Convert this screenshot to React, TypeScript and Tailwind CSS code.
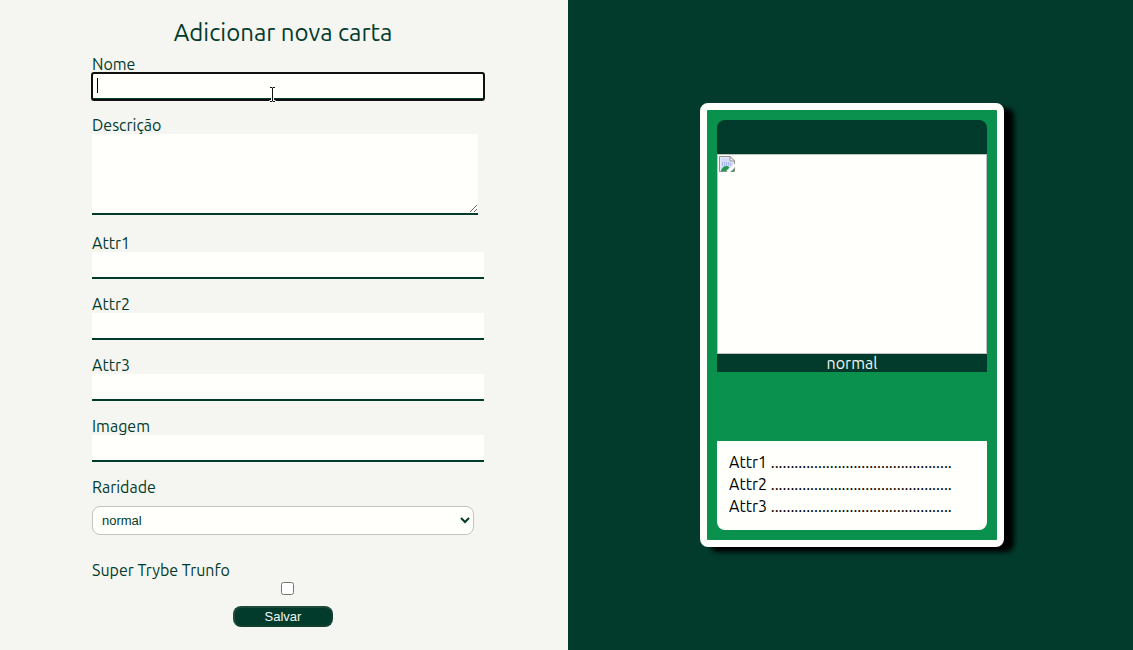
import { useState } from 'react';

const inputClass =
  'block h-[27px] w-[392px] border-b-2 border-[#023b2c] bg-[#fffffc] px-1 text-sm text-black outline-none';

function Field({ id, label, value, onChange }: { id: string; label: string; value: string; onChange: (v: string) => void }) {
  return (
    <div className="mb-4">
      <label htmlFor={id} className="block">{label}</label>
      <input id={id} className={inputClass} value={value} onChange={(e) => onChange(e.target.value)} />
    </div>
  );
}

function BrokenImage() {
  return (
    <svg width="16" height="16" viewBox="0 0 16 16" role="img" aria-label="Imagem da carta">
      <path d="M.5.5H11L15.5 5v10.500H.5z" fill="#e4eafc" stroke="#8f8f8f" />
      <path d="M2 2h8v3.500h4V8L7 15H2z" fill="#d3dcfb" />
      <path d="M3 6h1v4H3zM5 6h1v4H5zM7 6h1v4H7zM9 6h1v4H9zM11 7h1v3h-1z" fill="#a9b8f5" />
      <path d="M2 14.500c1-3 3.500-5 6.500-4.500l2 1.500-3.500 3.500H2z" fill="#23984f" />
      <path d="M11 .5V5h4.500z" fill="#fff" stroke="#8f8f8f" />
      <path d="M16 7.500 7.500 16H11l5-5z" fill="#fffffc" />
      <path d="m15 12.500-3 3h3z" fill="#2fa35a" />
    </svg>
  );
}

function TextCursor() {
  return (
    <svg className="pointer-events-none absolute top-[13px] left-[176px] z-10" width="9" height="17" viewBox="0 0 9 17" aria-hidden="true">
      <path d="M1.500 1.500H4l.5.5.5-.5h2.500M4.500 2v13M1.500 15.500H4l.5-.5.5.5h2.500" fill="none" stroke="#fff" strokeWidth="3" />
      <path d="M2 1.500h2l.5.5.5-.5h2M4.500 2v13M2 15.500h2l.5-.5.5.5h2" fill="none" stroke="#111" />
    </svg>
  );
}

export default function App() {
  const [name, setName] = useState('');
  const [attrs, setAttrs] = useState(['', '', '']);
  const [image, setImage] = useState('');
  const [rarity, setRarity] = useState('normal');
  const [trunfo, setTrunfo] = useState(false);

  return (
    <div className="grid min-h-screen grid-cols-[568fr_565fr] bg-[#023b2c] font-['Ubuntu','Noto_Sans',sans-serif] text-base leading-[18px] font-[450]">
      <section className="flex flex-col items-center bg-[#f5f5f2] pt-[19px] pr-0.5 text-[#023b2c]">
        <form className="w-[382px]" onSubmit={(e) => e.preventDefault()}>
          <h1 className="mb-[9px] text-center text-2xl leading-[27px] font-[450]">Adicionar nova carta</h1>

          <div className="mb-4">
            <label htmlFor="name" className="block">Nome</label>
            <div className="relative">
              <input
                id="name"
                autoFocus
                className="block h-[27px] w-[392px] rounded-xs border-b-2 border-[#023b2c] bg-[#fffffc] px-1 text-sm text-black outline-2 -outline-offset-1 outline-[#101010]"
                value={name}
                onChange={(e) => setName(e.target.value)}
              />
              {name === '' && <span className="pointer-events-none absolute top-[5px] left-[5px] h-[15px] w-px bg-black" />}
              <TextCursor />
            </div>
          </div>

          <div className="mb-[19px]">
            <label htmlFor="description" className="block">Descrição</label>
            <textarea id="description" className="block h-[81px] w-[386px] resize border-b-2 border-[#023b2c] bg-[#fffffc] p-1 text-sm text-black outline-none" />
          </div>

          {attrs.map((attr, i) => (
            <Field
              key={i}
              id={`attr${i + 1}`}
              label={`Attr${i + 1}`}
              value={attr}
              onChange={(v) => setAttrs(attrs.map((old, j) => (j === i ? v : old)))}
            />
          ))}
          <Field id="image" label="Imagem" value={image} onChange={setImage} />

          <label htmlFor="rarity" className="mb-2.5 block">Raridade</label>
          <select
            id="rarity"
            className="mb-[26px] block h-[29px] w-full rounded-lg border border-[#c3c3c1] bg-[#fffffc] pl-[5px] font-['Liberation_Sans',sans-serif] text-[13px] font-normal"
            value={rarity}
            onChange={(e) => setRarity(e.target.value)}
          >
            <option>normal</option>
            <option>raro</option>
            <option>muito raro</option>
          </select>

          <label htmlFor="trunfo" className="block">Super Trybe Trunfo</label>
          <div className="flex flex-col items-center">
            <input id="trunfo" type="checkbox" className="mt-[3px] mb-[11px] ml-2 size-[13px]" checked={trunfo} onChange={(e) => setTrunfo(e.target.checked)} />
            <button type="submit" className="h-[21px] w-[100px] rounded-lg border-2 border-t-[#1d4c3c] border-r-[#123f30] border-b-[#123f30] border-l-[#1d4c3c] bg-[#023b2c] font-['Liberation_Sans',sans-serif] text-[13px] leading-4 font-normal text-[#f5f5f2]">
              Salvar
            </button>
          </div>
        </form>
      </section>

      <section className="flex items-center justify-center pl-[3px]">
        <div className="flex h-[444px] w-[304px] flex-col rounded-lg border-[7px] border-[#fffffc] bg-[#0a914d] p-2.5 shadow-[10px_5px_5px_black]">
          <h2 className="h-[34px] rounded-t-lg bg-[#023b2c] text-center leading-[34px] text-[#f5f5f2]">{name}</h2>
          <div className="h-[200px] border border-[#c0c0c0] bg-[#fffffc] p-px">
            <BrokenImage />
          </div>
          <p className="bg-[#023b2c] text-center text-[#f5f5f2]">{rarity}</p>
          <div className="mt-auto rounded-b-lg bg-[#fffffc] px-3 pt-2.5 pb-[13px] leading-[22px] text-black">
            {attrs.map((attr, i) => (
              <p key={i}>Attr{i + 1} .............................................. {attr}</p>
            ))}
          </div>
        </div>
      </section>
    </div>
  );
}
